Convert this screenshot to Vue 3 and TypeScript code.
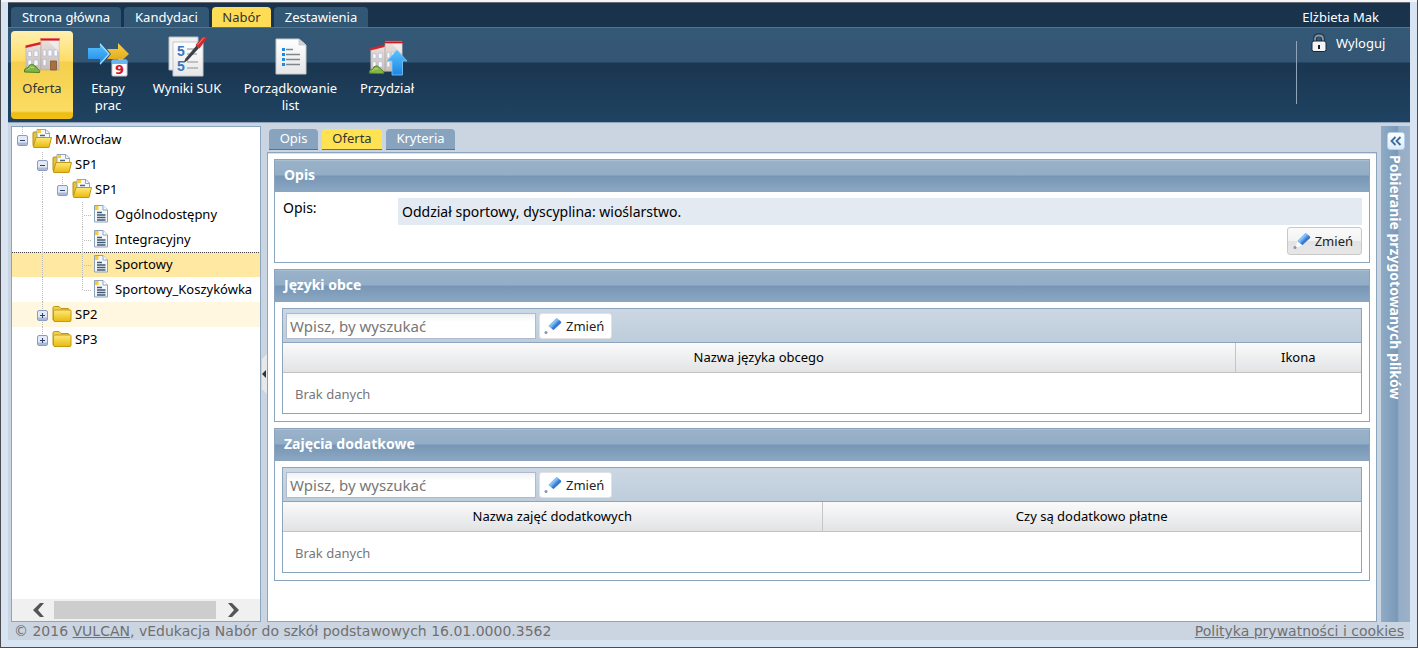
<script setup lang="ts">
import { ref } from 'vue'

type Cell = 'blank' | 'line' | 'tee' | 'elbow' | 'open' | 'openlast' | 'closed' | 'closedlast'

interface TreeRow {
  label: string
  cells: Cell[]
  icon: 'open' | 'folder' | 'doc'
  state?: 'selected' | 'hover'
}

interface GridSection {
  id: string
  title: string
  columns: { label: string; cls: string }[]
}

const mainTabs = ['Strona główna', 'Kandydaci', 'Nabór', 'Zestawienia']
const activeMain = ref('Nabór')

const ribbon = [
  { id: 'oferta', label: 'Oferta' },
  { id: 'etapy', label: 'Etapy prac' },
  { id: 'wyniki', label: 'Wyniki SUK' },
  { id: 'lista', label: 'Porządkowanie list' },
  { id: 'przydzial', label: 'Przydział' },
]
const activeRibbon = ref('oferta')

const subTabs = ['Opis', 'Oferta', 'Kryteria']
const activeSub = ref('Oferta')

const rows: TreeRow[] = [
  { label: 'M.Wrocław', cells: ['openlast'], icon: 'open' },
  { label: 'SP1', cells: ['blank', 'open'], icon: 'open' },
  { label: 'SP1', cells: ['blank', 'line', 'openlast'], icon: 'open' },
  { label: 'Ogólnodostępny', cells: ['blank', 'line', 'blank', 'tee'], icon: 'doc' },
  { label: 'Integracyjny', cells: ['blank', 'line', 'blank', 'tee'], icon: 'doc' },
  { label: 'Sportowy', cells: ['blank', 'line', 'blank', 'tee'], icon: 'doc', state: 'selected' },
  { label: 'Sportowy_Koszykówka', cells: ['blank', 'line', 'blank', 'elbow'], icon: 'doc' },
  { label: 'SP2', cells: ['blank', 'closed'], icon: 'folder', state: 'hover' },
  { label: 'SP3', cells: ['blank', 'closedlast'], icon: 'folder' },
]

const sections: GridSection[] = [
  {
    id: 'jezyki',
    title: 'Języki obce',
    columns: [
      { label: 'Nazwa języka obcego', cls: 'auto' },
      { label: 'Ikona', cls: 'narrow' },
    ],
  },
  {
    id: 'zajecia',
    title: 'Zajęcia dodatkowe',
    columns: [
      { label: 'Nazwa zajęć dodatkowych', cls: 'half' },
      { label: 'Czy są dodatkowo płatne', cls: 'half' },
    ],
  },
]
const search = ref<Record<string, string>>({ jezyki: '', zajecia: '' })

const isToggle = (c: Cell) => c.startsWith('open') || c.startsWith('closed')
</script>

<template>
  <div class="window">
    <svg class="defs" width="0" height="0" aria-hidden="true">
      <defs>
        <linearGradient id="gBlue" x1="0" y1="0" x2="0" y2="1">
          <stop offset="0" stop-color="#5cc2ff" />
          <stop offset="1" stop-color="#1b86e4" />
        </linearGradient>
        <linearGradient id="gGold" x1="0" y1="0" x2="0" y2="1">
          <stop offset="0" stop-color="#f8cf4a" />
          <stop offset="1" stop-color="#dfa210" />
        </linearGradient>
        <linearGradient id="gPage" x1="0" y1="0" x2="0" y2="1">
          <stop offset="0" stop-color="#ffffff" />
          <stop offset="1" stop-color="#e6e6e6" />
        </linearGradient>
        <linearGradient id="gWall" x1="0" y1="0" x2="0" y2="1">
          <stop offset="0" stop-color="#e8e0dc" />
          <stop offset="1" stop-color="#c9bdb7" />
        </linearGradient>
        <linearGradient id="gFolder" x1="0" y1="0" x2="0" y2="1">
          <stop offset="0" stop-color="#fdea7c" />
          <stop offset="1" stop-color="#e9b90a" />
        </linearGradient>
        <symbol id="school" viewBox="0 0 40 40">
          <path d="M4 11L19 7V34L4 34Z" fill="url(#gWall)" stroke="#b5aaa2" stroke-width=".6" />
          <path d="M19 4H37V34H19Z" fill="url(#gWall)" stroke="#b5aaa2" stroke-width=".6" />
          <path d="M3.500 9.500L18.500 6V8.500L3.500 12Z" fill="#d9202a" />
          <path d="M18.500 2H37.500V4.500H18.500Z" fill="#d2141d" />
          <path d="M19 2.500H37" stroke="#f4777a" stroke-width=".8" />
          <g fill="#f7faff" stroke="#b0bbd4" stroke-width=".7">
            <path d="M6 15.500h3.500v5H6zM12 15h4v5.500h-4zM6 24h3.500v5H6zM12 24h4v5.500h-4z" />
            <path d="M21 14h3v6h-3zM26 14h4v6h-4zM32 14h3.500v6H32zM21 23.500h3v6h-3z" />
          </g>
          <path d="M26 5H37V16Z" fill="#fff" opacity=".45" />
        </symbol>
        <symbol id="bush" viewBox="0 0 40 40">
          <path d="M2.500 36C2 33 4 31.500 6 32C7 27.500 12 27.500 13 30.500C15 31 15.500 32 15.500 33C17.500 33.500 18 35 17.500 36.500Z" fill="#83b544" stroke="#4d8022" />
          <path d="M5.500 33.500Q8 30 12 31.500" stroke="#b9dc80" fill="none" />
        </symbol>
        <symbol id="pencil" viewBox="0 0 18 18">
          <path d="M4.500 9L12 1.500Q13 1 14 2L17 4.500Q17.500 5.500 17 6L9.500 13Z" fill="#5da3ea" />
          <path d="M7.500 11.500L15.500 3.500L17 5Q17.200 5.500 17 6L9.500 13Z" fill="#3d78cc" />
          <path d="M4.500 9L12.500 1.500L14 2.500L6 10.500Z" fill="#8cc3f6" />
          <path d="M4 9.500L9 13.500L3 15.500Z" fill="#fcfcfc" />
          <circle cx="2" cy="15.500" r="1.500" fill="#8796aa" />
        </symbol>
      </defs>
    </svg>

    <div class="app">
      <header class="top">
        <nav class="main-tabs" aria-label="Menu główne">
          <button
            v-for="t in mainTabs"
            :key="t"
            class="main-tab"
            :class="{ active: t === activeMain }"
            @click="activeMain = t"
          >{{ t }}</button>
        </nav>
        <span class="user">Elżbieta Mak</span>
      </header>

      <div class="ribbon">
        <div class="tools">
          <button
            v-for="r in ribbon"
            :key="r.id"
            class="tool"
            :class="{ active: r.id === activeRibbon }"
            @click="activeRibbon = r.id"
          >
            <svg width="40" height="40" viewBox="0 0 40 40" aria-hidden="true">
              <template v-if="r.id === 'oferta'">
                <use href="#school" width="40" height="40" />
                <path d="M28.500 25H34.500V34H28.500Z" fill="#a9703f" stroke="#7a4a26" stroke-width=".7" />
                <use href="#bush" width="40" height="40" />
              </template>
              <template v-else-if="r.id === 'etapy'">
                <path d="M19 13H30V7L41 18L30 28V23H19L23 18Z" fill="url(#gGold)" />
                <path d="M0 12H12V7L22 18L12 29V23H0Z" fill="url(#gBlue)" />
                <path d="M12 8L21 18L12 28" fill="none" stroke="#a5ddff" stroke-width="1.200" />
                <rect x="24" y="24" width="15" height="16" rx="1" fill="#fafafa" stroke="#c7cbd0" />
                <rect x="24" y="24" width="15" height="4" fill="#6db5ef" />
                <text x="31.500" y="38" text-anchor="middle" class="cal">9</text>
              </template>
              <template v-else-if="r.id === 'wyniki'">
                <path d="M2 1H31V34H2Z" fill="#f1f1f1" stroke="#b9bdc2" />
                <path d="M6 6H36V40H6Z" fill="url(#gPage)" stroke="#c2c6ca" />
                <text x="10" y="20" class="five">5</text>
                <text x="10" y="35" class="five">5</text>
                <path d="M20 13H30M20 18H30M20 26H31M20 32H31" stroke="#8b9096" stroke-width="1.200" />
                <path d="M16.500 27L18.500 22.500L29.500 9.500L32 12L20.500 24.500Z" fill="#3d4148" />
                <path d="M28.500 9L34.500 2Q38 -.5 40 2L32.500 12.500Z" fill="#cf2b2e" />
                <path d="M30.500 9L37 1.500" stroke="#f58a86" />
              </template>
              <template v-else-if="r.id === 'lista'">
                <path d="M5 3H28L35 9V38H5Z" fill="url(#gPage)" stroke="#c4c8cc" />
                <path d="M28 3V9H35Z" fill="#d3d6d9" stroke="#b9bdc1" stroke-width=".7" />
                <path d="M15 13.500H22M15 18.500H29M15 23.500H29M15 28.500H29" stroke="#7e868e" stroke-width="1.400" />
                <path d="M11 13.500H14M11 18.500H14M11 23.500H14M11 28.500H14" stroke="#1f8ae0" stroke-width="3" />
              </template>
              <template v-else>
                <use href="#school" width="38" height="38" y="3" />
                <use href="#bush" width="38" height="38" y="3" />
                <path d="M30 14L40 25H35.500V39H25V25H20Z" fill="url(#gBlue)" stroke="#7cc6f8" stroke-width=".8" />
              </template>
            </svg>
            <span>{{ r.label }}</span>
          </button>
        </div>
        <div class="session">
          <button class="logout">
            <svg width="16" height="20" viewBox="0 0 16 20" aria-hidden="true">
              <path d="M4 9V6Q4 2 8 2Q12 2 12 6V9" fill="none" stroke="#1f3a52" stroke-width="4" />
              <path d="M4 9V6Q4 2.500 8 2.500Q12 2.500 12 6V9" fill="none" stroke="#8d959c" stroke-width="1.800" />
              <rect x="1" y="8" width="14" height="10.500" rx="2" fill="#f4f4f4" stroke="#16293a" />
              <rect x="7" y="12" width="2" height="4" fill="#16202a" />
            </svg>
            <span>Wyloguj</span>
          </button>
        </div>
      </div>

      <div class="work">
        <aside class="tree-panel">
          <ul class="tree" role="tree" aria-label="Jednostki">
            <li v-for="(row, i) in rows" :key="i" class="row" :class="row.state" role="treeitem">
              <template v-for="(c, j) in row.cells" :key="j">
                <button v-if="isToggle(c)" class="cell toggle" :class="c" :aria-label="'Przełącz ' + row.label">
                  <svg width="12" height="12" viewBox="0 0 12 12" aria-hidden="true">
                    <rect x=".5" y=".5" width="10" height="10" rx="1.500" fill="#e4eaf5" stroke="#8c9cbd" />
                    <path d="M1 7.500H10V10H1Z" fill="#aab9d6" />
                    <path d="M3 5.500H8" stroke="#2c4370" />
                    <path v-if="c.startsWith('closed')" d="M5.500 3V8" stroke="#2c4370" />
                  </svg>
                </button>
                <span v-else class="cell" :class="c"></span>
              </template>
              <svg v-if="row.icon === 'open'" class="ico" width="20" height="20" viewBox="0 0 20 20" aria-hidden="true">
                <path d="M1 7V4Q1 3 2 3H6L7 5V17H2Q1 17 1 16Z" fill="#e7c332" stroke="#b88f12" />
                <path d="M5 .5H14L17.500 4V12H5Z" fill="#f5f8fb" stroke="#8fa7bc" />
                <path d="M13.500 .5V4.500H17.500" fill="none" stroke="#8fa7bc" />
                <path d="M6 1H9V4H6Z" fill="#f6c93a" />
                <path d="M8 6.500H13" stroke="#4a6785" stroke-width="1.500" />
                <path d="M4 8.500H19.500L17 18.500H2Q1 18.500 1.500 17Z" fill="url(#gFolder)" stroke="#c1980f" />
              </svg>
              <svg v-else-if="row.icon === 'folder'" class="ico" width="20" height="20" viewBox="0 0 20 20" aria-hidden="true">
                <path d="M1 6V4Q1 2.500 2.500 2.500H7L9 4.500H16Q17 4.500 17 6V16H1Z" fill="#efd052" stroke="#bd9413" />
                <path d="M2.500 6H18Q19 6 19 7V16Q19 17.500 18 17.500H3Q1.500 17.500 1.500 16V7Z" fill="url(#gFolder)" stroke="#c59b10" />
              </svg>
              <svg v-else class="ico" width="20" height="20" viewBox="0 0 20 20" aria-hidden="true">
                <path d="M2.500 1.500H11L15.500 6V18H2.500Z" fill="#f4f7fa" stroke="#8ea3b7" />
                <path d="M11 1.500V6H15.500" fill="#fff" stroke="#8ea3b7" />
                <path d="M3 2H6.500V6H3Z" fill="#f6cc3c" />
                <path d="M5 8.500H10M5 11H13.500M5 13.500H13.500M5 16H13.500" stroke="#3e5a78" stroke-width="1.500" />
              </svg>
              <span class="label">{{ row.label }}</span>
            </li>
          </ul>
          <div class="hscroll">
            <button aria-label="Przewiń w lewo">
              <svg width="12" height="14" viewBox="0 0 12 14"><path d="M11 0H7L0 7L7 14H11L5 7Z" fill="#555" /></svg>
            </button>
            <span class="thumb"></span>
            <button aria-label="Przewiń w prawo">
              <svg width="12" height="14" viewBox="0 0 12 14"><path d="M1 0H5L12 7L5 14H1L7 7Z" fill="#555" /></svg>
            </button>
          </div>
        </aside>

        <button class="splitter" aria-label="Zwiń drzewo">
          <svg width="6" height="40" viewBox="0 0 6 40" aria-hidden="true">
            <path d="M6 0L1 5V35L6 40Z" fill="#e8e8e8" />
            <path d="M5 16V24L1 20Z" fill="#333" />
          </svg>
        </button>

        <main class="center">
          <nav class="sub-tabs" aria-label="Zakładki">
            <button
              v-for="t in subTabs"
              :key="t"
              class="sub-tab"
              :class="{ active: t === activeSub }"
              @click="activeSub = t"
            >{{ t }}</button>
          </nav>
          <div class="content">
            <section class="box">
              <h2>Opis</h2>
              <div class="body">
                <dl class="field">
                  <dt>Opis:</dt>
                  <dd>Oddział sportowy, dyscyplina: wioślarstwo.</dd>
                </dl>
                <div class="actions">
                  <button class="btn raised">
                    <svg width="18" height="18" aria-hidden="true"><use href="#pencil" /></svg>
                    <span>Zmień</span>
                  </button>
                </div>
              </div>
            </section>

            <section v-for="s in sections" :key="s.id" class="box">
              <h2>{{ s.title }}</h2>
              <div class="body">
                <div class="grid">
                  <div class="toolbar">
                    <input v-model="search[s.id]" type="text" placeholder="Wpisz, by wyszukać" :aria-label="'Szukaj: ' + s.title" />
                    <button class="btn">
                      <svg width="18" height="18" aria-hidden="true"><use href="#pencil" /></svg>
                      <span>Zmień</span>
                    </button>
                  </div>
                  <table>
                    <thead>
                      <tr>
                        <th v-for="c in s.columns" :key="c.label" :class="c.cls" scope="col">{{ c.label }}</th>
                      </tr>
                    </thead>
                    <tbody>
                      <tr>
                        <td :colspan="s.columns.length">Brak danych</td>
                      </tr>
                    </tbody>
                  </table>
                </div>
              </div>
            </section>
          </div>
        </main>

        <aside class="dock">
          <button class="expand" aria-label="Rozwiń panel">
            <svg width="12" height="10" viewBox="0 0 12 10" aria-hidden="true">
              <path d="M5.500 1L1.500 5L5.500 9M10.500 1L6.500 5L10.500 9" fill="none" stroke="#3c6da0" stroke-width="1.800" />
            </svg>
          </button>
          <span class="dock-title">Pobieranie przygotowanych plików</span>
        </aside>
      </div>

      <footer class="foot">
        <span>© 2016 <a href="#vulcan">VULCAN</a>, vEdukacja Nabór do szkół podstawowych 16.01.0000.3562</span>
        <a href="#cookies">Polityka prywatności i cookies</a>
      </footer>
    </div>
  </div>
</template>

<style>
body {
  margin: 0;
}
</style>

<style scoped>
* {
  box-sizing: border-box;
}
.window {
  display: flex;
  height: 100vh;
  padding: 2px 7px 7px;
  border: 1px solid #4b4b50;
  border-top: 0;
  background: linear-gradient(#f2f5f9, #f2f5f9) top / 100% 2px no-repeat #d8e4f1;
  font: 13px/17px "Noto Sans", sans-serif;
  color: #000;
}
.defs {
  position: absolute;
}
button {
  margin: 0;
  padding: 0;
  border: 0;
  background: none;
  font: inherit;
  color: inherit;
  cursor: pointer;
}
.app {
  flex: 1;
  min-width: 0;
  display: flex;
  flex-direction: column;
  border-top: 1px solid #6c6c70;
  background: #cbd5e2;
}
.top {
  flex: none;
  display: flex;
  justify-content: space-between;
  align-items: flex-end;
  height: 24px;
  padding: 0 31px 0 3px;
  background: #19334c;
  color: #fff;
}
.main-tabs {
  display: grid;
  grid-template-columns: 110px 85px 59px 94px;
  gap: 3px;
}
.main-tab {
  height: 20px;
  border-radius: 4px 4px 0 0;
  background: #315775;
  white-space: nowrap;
}
.main-tab.active {
  background: #ffdc55;
  color: #333;
}
.user {
  height: 20px;
  line-height: 20px;
}
.ribbon {
  flex: none;
  display: flex;
  justify-content: space-between;
  min-height: 96px;
  padding: 3px 3px 3px;
  border-top: 1px solid #527490;
  border-bottom: 1px solid #8fa4ba;
  background: linear-gradient(#335977 0, #335674 34px, #1a3650 35px, #1f4362 100%);
  color: #fff;
}
.tools {
  display: grid;
  grid-template-columns: 62px 62px 88px 111px 74px;
  gap: 4px;
}
.tool {
  display: flex;
  flex-direction: column;
  align-items: center;
  gap: 4px;
  padding: 5px 8px 0;
  border-radius: 4px;
}
.tool svg {
  flex: none;
  overflow: visible;
}
.tool.active {
  background: linear-gradient(#fff0b0 0, #fddd67 30px, #f5cf4d 31px, #fbdc62 80px, #eebc12 82px, #f0c21c 100%);
  color: #333;
}
.cal {
  font: bold 13px "DejaVu Sans", sans-serif;
  fill: #d8161f;
}
.five {
  font: bold 14px "Liberation Sans", sans-serif;
  fill: #3977c4;
}
.session {
  width: 111px;
  margin: 10px 0 15px;
  border-left: 1px solid #8fa4b8;
}
.logout {
  display: flex;
  align-items: center;
  gap: 9px;
  height: 20px;
  margin: -8px 0 0 14px;
}
.work {
  flex: 1;
  min-height: 0;
  display: flex;
  padding: 3px 0 0 3px;
}
.tree-panel {
  flex: none;
  display: flex;
  flex-direction: column;
  width: 250px;
  border: 1px solid #8ba5be;
  background: #fff;
}
.tree {
  flex: 1;
  margin: 0;
  padding: 0;
  list-style: none;
  overflow: hidden;
}
.row {
  display: flex;
  align-items: flex-start;
  height: 25px;
  white-space: nowrap;
}
.row.selected {
  background: linear-gradient(90deg, #444 50%, transparent 50%) 0 0 / 2px 1px repeat-x #ffe8a1;
}
.row.hover {
  background: #fff7df;
}
.cell {
  flex: none;
  width: 20px;
  height: 25px;
  background-repeat: no-repeat;
}
.line,
.tee,
.elbow,
.toggle {
  --v: repeating-linear-gradient(#bbb 0 1px, transparent 1px 2px);
  --h: repeating-linear-gradient(90deg, #bbb 0 1px, transparent 1px 2px);
}
.line,
.toggle.open,
.toggle.closed {
  background: var(--v) 10px 0 / 1px 100% no-repeat;
}
.tee {
  background: var(--v) 10px 0 / 1px 100% no-repeat, var(--h) 12px 13px / 7px 1px no-repeat;
}
.elbow {
  background: var(--v) 10px 0 / 1px 14px no-repeat, var(--h) 12px 13px / 7px 1px no-repeat;
}
.toggle.openlast,
.toggle.closedlast {
  background: var(--v) 10px 0 / 1px 12px no-repeat;
}
.toggle {
  display: flex;
  align-items: center;
  padding: 2px 0 0 5px;
}
.ico {
  flex: none;
  margin-top: 2px;
}
.label {
  padding-left: 3px;
  line-height: 24px;
}
.hscroll {
  flex: none;
  display: flex;
  align-items: stretch;
  height: 22px;
  padding: 2px 20px;
  background: #f0f0f0;
}
.hscroll button {
  display: flex;
  align-items: center;
  justify-content: center;
  width: 14px;
  margin-right: 8px;
}
.hscroll button:last-child {
  margin: 0 0 0 10px;
}
.thumb {
  flex: 1;
  background: #cdcdcd;
}
.splitter {
  flex: none;
  display: flex;
  align-items: center;
  width: 6px;
}
.center {
  flex: 1;
  min-width: 0;
  display: flex;
  flex-direction: column;
  padding-top: 3px;
}
.sub-tabs {
  flex: none;
  display: grid;
  grid-template-columns: 49px 60px 69px;
  gap: 4px;
  padding: 0 2px 2px;
}
.sub-tab {
  height: 21px;
  padding: 0 0 2px;
  border-bottom: 1px solid #54748f;
  border-radius: 4px 4px 0 0;
  background: #88a3be;
  color: #fff;
}
.sub-tab.active {
  background: #ffe251;
  color: #333;
}
.content {
  flex: 1;
  min-height: 0;
  display: flex;
  flex-direction: column;
  gap: 6px;
  padding: 6px;
  border: 1px solid #8ba5be;
  background: linear-gradient(#d3e1f1, #d3e1f1) top / 100% 1px no-repeat #fff;
}
.box {
  flex: none;
  border: 1px solid #8ba5be;
}
.box h2 {
  height: 32px;
  margin: 0;
  padding: 0 9px;
  border-top: 1px solid #a9bfd2;
  border-bottom: 1px solid #8ba5be;
  background: linear-gradient(#9ab2c9 0, #92adc6 14px, #7796b6 15px, #8aa7c2 100%);
  font-size: 14px;
  line-height: 28px;
  color: #fff;
}
.body {
  padding: 6px 7px 7px;
}
.field {
  display: grid;
  grid-template-columns: 115px 1fr;
  margin: 0;
  padding-left: 1px;
  font-size: 14px;
}
.field dt {
  line-height: 20px;
}
.field dd {
  margin: 0;
  padding: 1px 4px 0;
  background: #e3eaf1;
  line-height: 26px;
}
.actions {
  display: flex;
  justify-content: flex-end;
  padding-top: 2px;
}
.btn {
  display: flex;
  align-items: center;
  gap: 4px;
  height: 26px;
  padding: 0 7px 0 4px;
  border: 1px solid #e2e2e2;
  border-radius: 3px;
  background: #fff;
  color: #222;
}
.btn.raised {
  height: 28px;
  padding: 0 8px 0 5px;
  border-color: #c9c9c9;
  background: linear-gradient(#fafafa 0, #f3f3f3 48%, #e3e3e3 52%, #e6e6e6 100%);
}
.grid {
  border: 1px solid #8ba5be;
}
.toolbar {
  display: flex;
  gap: 3px;
  padding: 4px 3px 3px;
  background: linear-gradient(#cbd7e3, #becddb);
  border-bottom: 1px solid #8ba5be;
}
.toolbar input {
  width: 250px;
  height: 26px;
  padding: 0 3px 1px;
  border: 1px solid #b1b9cf;
  border-radius: 0;
  background: linear-gradient(#eef2f4, #fff 8px);
  font: inherit;
  font-size: 15px;
}
.toolbar input::placeholder {
  color: #777;
  opacity: 1;
}
table {
  width: 100%;
  border-collapse: collapse;
  table-layout: fixed;
}
th {
  height: 29px;
  padding: 0;
  border-bottom: 1px solid #c2c2c2;
  background: linear-gradient(#fafafa, #e2e3e5);
  font-weight: normal;
}
th + th {
  border-left: 1px solid #c5c5c5;
}
.narrow {
  width: 126px;
}
.half {
  width: 50%;
}
td {
  height: 41px;
  padding: 3px 12px 0;
  color: #777;
}
.dock {
  flex: none;
  display: flex;
  flex-direction: column;
  align-items: center;
  gap: 5px;
  width: 29px;
  margin-left: 4px;
  padding-top: 6px;
  background: linear-gradient(90deg, #8fabc5 0, #7c9bba 15px, #7796b6 16px, #95adc6 18px, #9db1c8 100%);
  color: #fff;
}
.expand {
  flex: none;
  display: flex;
  align-items: center;
  justify-content: center;
  width: 18px;
  height: 18px;
  border: 1px solid #b3d0f0;
  border-radius: 3px;
  background: linear-gradient(#fff, #dcebfb);
}
.dock-title {
  writing-mode: vertical-rl;
  font-size: 14px;
  font-weight: bold;
  white-space: nowrap;
}
.foot {
  flex: none;
  display: flex;
  justify-content: space-between;
  height: 18px;
  padding: 0 6px;
  font: 14px/18px "DejaVu Sans", Verdana, sans-serif;
  color: #707070;
}
.foot a {
  color: inherit;
}
</style>
